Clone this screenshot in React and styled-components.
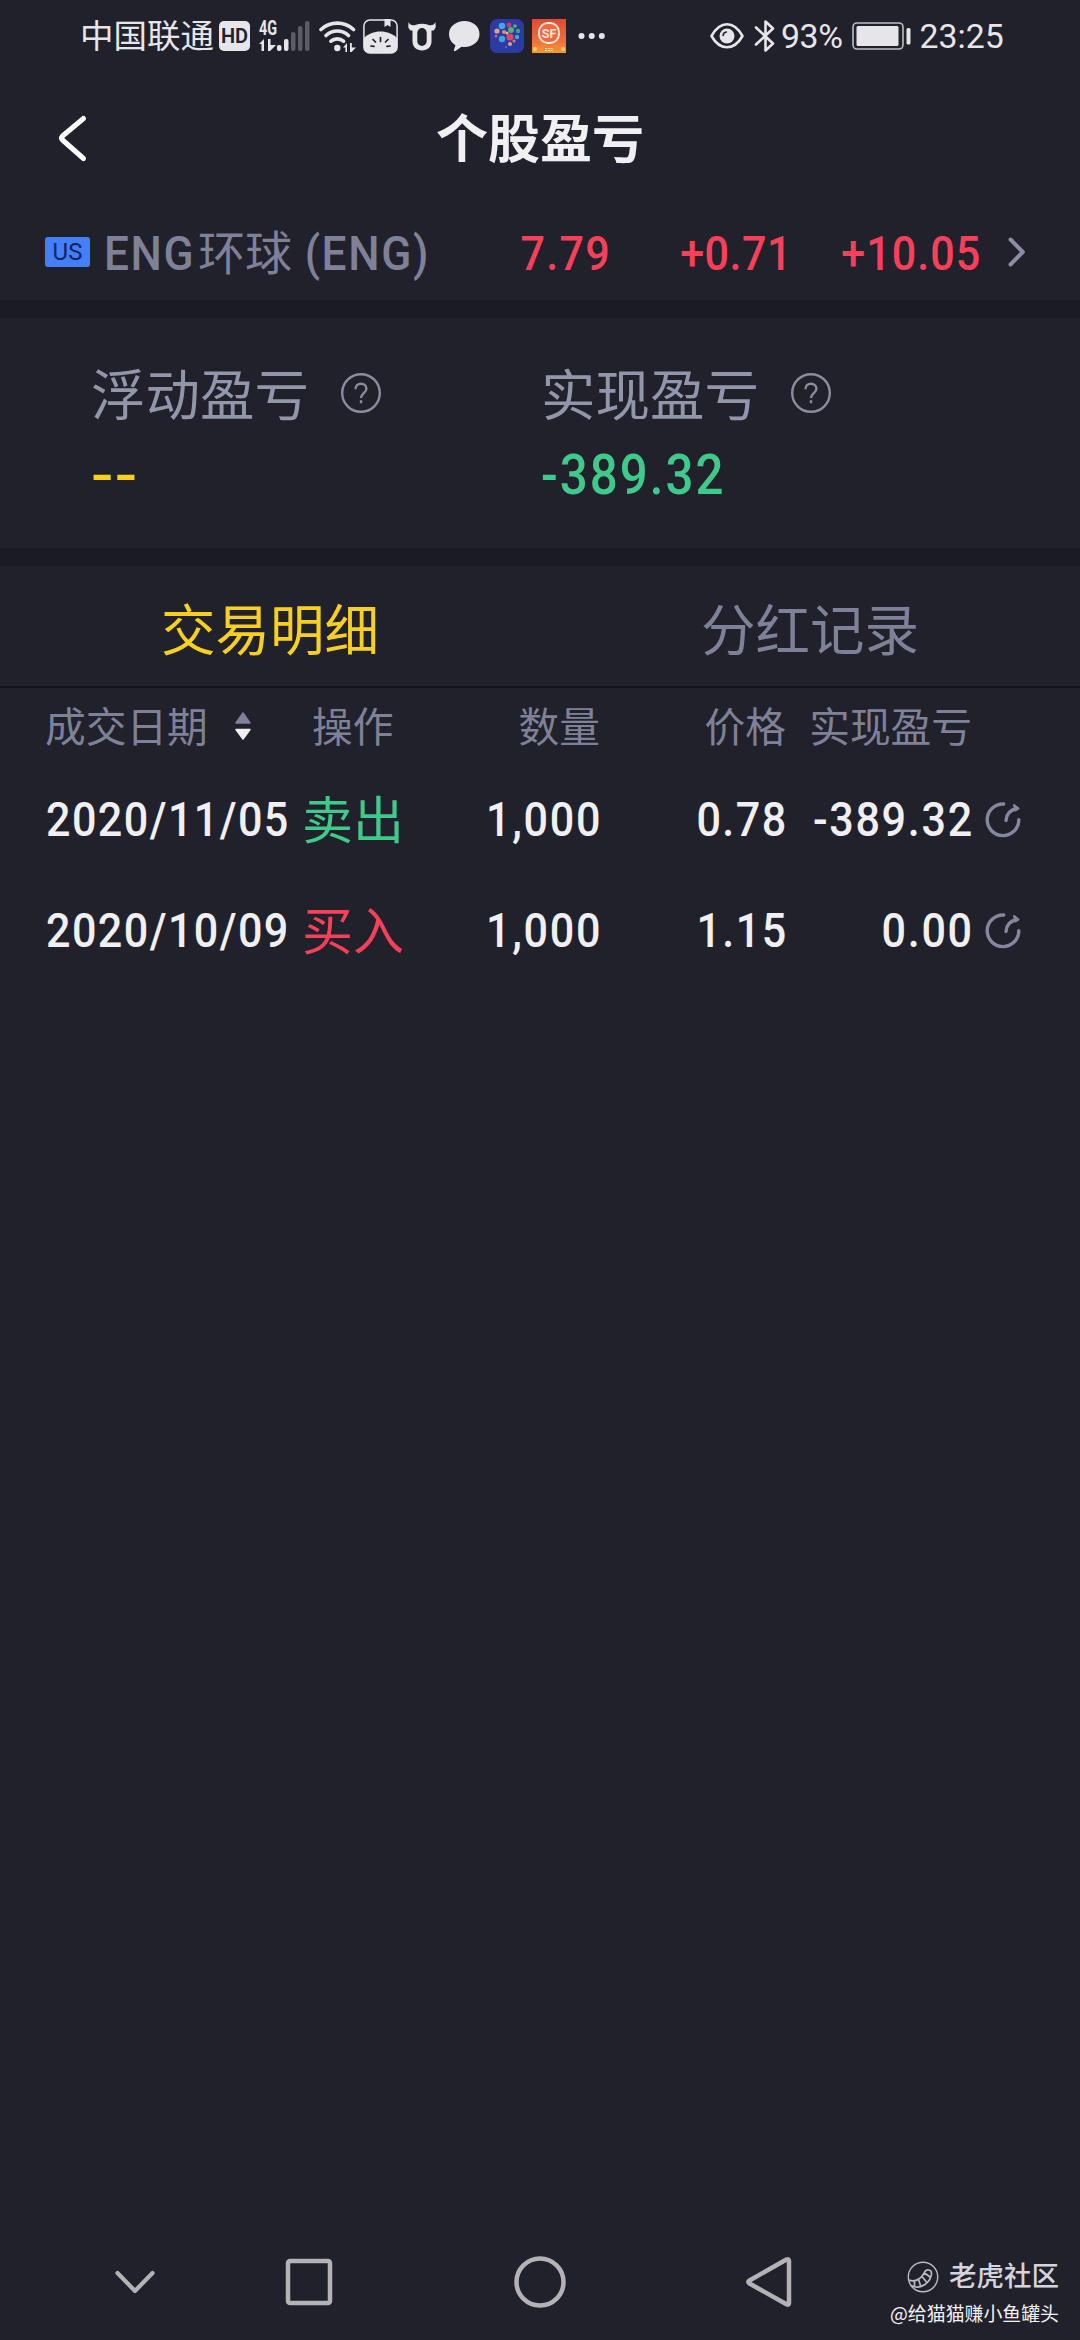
import React from 'react'
import styled, { createGlobalStyle } from 'styled-components'

const colors = {
    bg: '#21212b',
    gap: '#1b1b24',
    line: '#14141c',
    text: '#f0f0f2',
    muted: '#7f8199',
    label: '#9395ab',
    red: '#f8405a',
    green: '#3fc98a',
    yellow: '#f8d021',
    status: '#e6e6ea',
    nav: '#b3b3b7',
}

const GlobalStyle = createGlobalStyle`
    body {
        margin: 0;
        background: ${colors.bg};
        font-family: Roboto, 'Noto Sans CJK SC', sans-serif;
    }
`

const Screen = styled.div`
    position: relative;
    display: flex;
    flex-direction: column;
    width: 1080px;
    height: 2340px;
    overflow: hidden;
    background: ${colors.bg};
    color: ${colors.text};
    white-space: nowrap;
`

/* status bar */

const StatusBar = styled.div`
    display: flex;
    justify-content: space-between;
    height: 74px;
    padding: 0 77px 0 80px;
    box-sizing: border-box;
    color: ${colors.status};
    font-size: 33.5px;
    line-height: 76px;
`

const StatusGroup = styled.div`
    display: flex;
    align-items: center;
    height: 72px;
`

const StatusIcon = styled.svg`
    display: block;
    flex: none;
    margin-left: ${(props) => props.$gap || 0}px;
`

const StatusText = styled.span`
    width: ${(props) => props.$width}px;
    margin-left: ${(props) => props.$gap || 0}px;
    padding-top: 1px;
    font-size: ${(props) => props.$size || 33.5}px;
    letter-spacing: ${(props) => props.$spacing || 0}px;
`

const HdBadge = styled.span`
    width: 31px;
    height: 30px;
    margin-left: 5px;
    border-radius: 5px;
    background: ${colors.status};
    color: ${colors.bg};
    font-size: 20px;
    font-weight: 600;
    line-height: 31px;
    text-align: center;
`

const Network = styled.div`
    display: flex;
    flex-direction: column;
    width: 19px;
    height: 32px;
    margin-left: 9px;
`

const NetworkType = styled.span`
    height: 19px;
    font-size: 20px;
    font-weight: 700;
    line-height: 17px;
    transform: scaleX(0.72);
    transform-origin: left;
`

/* page header */

const Header = styled.header`
    display: grid;
    grid-template-columns: 140px 1fr 140px;
    align-items: center;
    height: 130px;
`

const BackIcon = styled.svg`
    display: block;
    margin-left: 56px;
`

const Title = styled.h1`
    margin: 0;
    padding-top: 4px;
    font-size: 52px;
    font-weight: 700;
    line-height: 76px;
    text-align: center;
`

/* narrow digits */

const Num = styled.span`
    display: block;
    font-size: ${(props) => props.$size || 49}px;
    font-weight: 500;
    letter-spacing: ${(props) => props.$spacing || 2}px;
    margin-right: -${(props) => props.$spacing || 2}px;
    transform: scaleX(${(props) => props.$scale || 0.88});
    transform-origin: ${(props) => props.$origin || 'right'};
`

const Quote = styled.section`
    display: grid;
    grid-template-columns: 45px 340px 180px 181px 189px 1fr;
    align-items: center;
    height: 96px;
    padding-left: 45px;
    color: ${colors.red};
    line-height: 80px;
`

const Market = styled.span`
    height: 30px;
    border-radius: 3px;
    background: #447ffb;
    color: #10245c;
    font-size: 24px;
    line-height: 31px;
    text-align: center;
`

const StockName = styled.span`
    display: flex;
    padding: 3px 0 0 14px;
    color: ${colors.muted};
    font-size: 47px;
`

const Latin = styled.span`
    width: ${(props) => props.$width}px;
    font-size: 48px;
    font-weight: 500;
    letter-spacing: 1.8px;
    transform: scaleX(0.92);
    transform-origin: left;
`

const QuoteCell = styled.span`
    display: flex;
    justify-content: flex-end;
    padding-top: 3px;
`

const Divider = styled.div`
    height: 18px;
    background: ${colors.gap};
`

/* summary */

const Summary = styled.section`
    display: grid;
    grid-template-columns: 450px 1fr;
    height: 230px;
    padding: 48px 0 0 91px;
    box-sizing: border-box;
`

const SummaryLabel = styled.div`
    display: flex;
    align-items: center;
    height: 60px;
    color: ${colors.label};
    font-size: 54.5px;
    line-height: 64px;
`

const HelpIcon = styled.svg`
    margin: -6px 0 0 31px;
`

const SummaryValue = styled.div`
    display: flex;
    height: 60px;
    margin-top: 19px;
    color: ${(props) => props.color};
    line-height: 61px;
`

/* tabs */

const Tabs = styled.nav`
    display: grid;
    grid-template-columns: 1fr 1fr;
    height: 122px;
    box-sizing: border-box;
    border-bottom: 2px solid ${colors.line};
`

const Tab = styled.div`
    padding-top: 5px;
    color: ${(props) => (props.$active ? colors.yellow : colors.muted)};
    font-size: 54.5px;
    line-height: 120px;
    text-align: center;
`

/* trades */

const Row = styled.div`
    display: grid;
    grid-template-columns: 256px 128px 171px 186px 186px 1fr;
    align-items: center;
    height: 111px;
    padding-left: 45px;
    line-height: 80px;
`

const HeadRow = styled(Row)`
    height: 76px;
    color: ${colors.muted};
    font-size: 40.7px;
    line-height: 80px;
`

const Cell = styled.span`
    display: flex;
    align-items: center;
    justify-content: ${(props) => (props.$right ? 'flex-end' : 'flex-start')};
    padding-left: ${(props) => props.$indent || 0}px;
`

const Action = styled.span`
    padding-top: 4px;
    color: ${(props) => (props.$sell ? colors.green : colors.red)};
    font-size: 51px;
`

const SortIcon = styled.svg`
    margin: -4px 0 0 26px;
`

const ShareIcon = styled.svg`
    display: block;
    margin-left: 13px;
`

/* system navigation */

const SystemNav = styled.footer`
    display: grid;
    grid-template-columns: 194px 154px 308px 150px;
    justify-content: start;
    align-items: center;
    justify-items: center;
    height: 116px;
    margin-top: auto;
    padding-left: 38px;
`

const Watermark = styled.div`
    position: absolute;
    right: 21px;
    bottom: 12px;
    display: flex;
    flex-direction: column;
    align-items: flex-end;
`

const Community = styled.div`
    display: flex;
    align-items: center;
    gap: 10px;
    height: 34px;
    color: #d3d4dd;
    font-size: 27.5px;
    font-weight: 500;
    line-height: 34px;
`

const Author = styled.div`
    height: 28px;
    margin-top: 6px;
    color: #f2f2f4;
    font-family: 'Noto Sans CJK SC', sans-serif;
    font-size: 18.9px;
    line-height: 25px;
`

const trades = [
    { date: '2020/11/05', sell: true, action: '卖出', qty: '1,000', price: '0.78', profit: '-389.32' },
    { date: '2020/10/09', sell: false, action: '买入', qty: '1,000', price: '1.15', profit: '0.00' },
]

const dots = [
    [12, 7, 3.3, '#3fa9e8'], [19, 6, 2.4, '#d9355a'], [25, 7, 1.8, '#58b96a'],
    [7, 12, 2.6, '#e2a08c'], [14, 13, 2, '#e78f4c'], [21, 11, 3, '#4fb37c'],
    [28, 12, 2.2, '#40a76b'], [6, 17, 1.5, '#d85a7c'], [12, 20, 3.2, '#39a6dc'],
    [20, 18, 3.5, '#dd4465'], [27, 18, 2.2, '#46a7d8'], [17, 14, 1.5, '#f0b49c'],
    [24, 22, 1.6, '#e4774f'], [20, 25, 2.1, '#dc9a90'], [16, 28, 1, '#4c78e0'],
]

const Help = () => (
    <HelpIcon width='42' height='42' viewBox='0 0 42 42' fill='none' stroke='#8b8c9c' strokeWidth='2.4'>
        <circle cx='21' cy='21' r='18.8' />
        <path d='M15.5 17.2c0-3.4 2.3-5.4 5.5-5.4s5.4 2 5.4 4.9c0 4.4-5.4 4.4-5.4 9.3' />
        <path d='M21 28.2v3' />
    </HelpIcon>
)

const Share = () => (
    <ShareIcon width='38' height='38' viewBox='0 0 38 38' fill='none' stroke='#85879f' strokeWidth='3.4' strokeLinecap='round' strokeLinejoin='round'>
        <path d='M18.7 3A15.800 15.800 0 1 0 33.800 18.800' />
        <path d='M21 19.500c.3-6.500 4-10.500 11-12' />
        <path d='M29 4 33.500 7.500 30.500 9.500z' fill='#85879f' strokeWidth='2' />
    </ShareIcon>
)

const Status = () => (
    <StatusBar>
        <StatusGroup>
            <StatusText $width={134}>中国联通</StatusText>
            <HdBadge>HD</HdBadge>
            <Network>
                <NetworkType>4G</NetworkType>
                <svg width='17' height='12' viewBox='0 0 17 12' fill={colors.status}>
                    <path d='M0 5 5 0v12H2.500V5zM9 0h2.500v6H17l-6 6H9z' />
                </svg>
            </Network>
            <StatusIcon width='34' height='32' viewBox='0 0 34 32' $gap={-1}>
                <rect x='0' y='25' width='4.500' height='6' rx='2' fill={colors.status} />
                <rect x='7' y='19' width='4.500' height='12' rx='2' fill={colors.status} />
                <rect x='14' y='12' width='4.500' height='19' rx='2' fill='#5c5c66' />
                <rect x='21' y='6' width='4.500' height='25' rx='2' fill='#5c5c66' />
                <rect x='28' y='1' width='4.500' height='30' rx='2' fill='#5c5c66' />
            </StatusIcon>
            <StatusIcon width='38' height='32' viewBox='0 0 38 32' fill='none' stroke={colors.status} strokeWidth='3.600' strokeLinecap='round' $gap={7.5}>
                <path d='M2 9.500a24 24 0 0 1 32.500 0M7 15.500a16.500 16.500 0 0 1 22.500 0M12 21.200a9.500 9.500 0 0 1 12.500 0' />
                <circle cx='18.300' cy='28' r='3.200' fill={colors.status} stroke='none' />
                <path d='M24 27.500 28 23v9h-1.600v-4.500zM31 23h1.800v4.500H37L32.500 32H31z' fill={colors.status} stroke='none' />
            </StatusIcon>
            <StatusIcon width='35' height='35' viewBox='0 0 35 35' $gap={6}>
                <rect x='.9' y='.9' width='33.200' height='33.200' rx='6' fill='none' stroke={colors.status} strokeWidth='1.500' />
                <path d='M21.500 0h6v8l-3-2-3 2z' fill={colors.status} />
                <path d='M1 19c4-4 10-6.500 16.500-6.500S30 15 34 19v9a6 6 0 0 1-6 6H7a6 6 0 0 1-6-6z' fill={colors.status} />
                <path d='M8 27l3 .4M10 20.500l2.500 2.500M17.500 18.500v4M25 20.500 22.500 23M27 27l-3 .4' stroke={colors.bg} strokeWidth='1.700' strokeLinecap='round' />
            </StatusIcon>
            <StatusIcon width='30' height='32' viewBox='0 0 30 32' $gap={9.5}>
                <path d='M1.500 2c1.500 3 4 4.200 7.500 2.700 4-1.400 8-1.400 12 0C24.500 6.200 27 5 28.500 2l.2 5.500-2 3h-2.200V21c0 6-4 9.500-9.500 9.500S5.500 27 5.500 21V10.500H3.300l-2-3z' fill={colors.status} />
                <rect x='10.300' y='8' width='9.400' height='18' rx='4.700' fill={colors.bg} />
            </StatusIcon>
            <StatusIcon width='32' height='32' viewBox='0 0 32 32' fill={colors.status} $gap={11}>
                <path d='M16.500 1C25 1 31.500 6.500 31.500 14S25 27 16.500 27c-1 0-2-.1-3-.3L7.500 31c-1 .5-2-.2-1.500-1.300l1.500-4.500C3.500 22.700 1 19 1 14 1 6.500 8 1 16.500 1z' />
            </StatusIcon>
            <StatusIcon width='34' height='34' viewBox='0 0 34 34' $gap={9.5}>
                <rect width='34' height='34' rx='7' fill='#2d3aa3' />
                {dots.map(([x, y, r, fill]) => (
                    <circle key={`${x}-${y}`} cx={x} cy={y} r={r} fill={fill} />
                ))}
            </StatusIcon>
            <StatusIcon width='34' height='34' viewBox='0 0 34 34' $gap={8}>
                <defs>
                    <linearGradient id='sf' x1='0' y1='0' x2='0' y2='1'>
                        <stop offset='0' stopColor='#e04a35' />
                        <stop offset='.6' stopColor='#f26a3c' />
                        <stop offset='1' stopColor='#f29a32' />
                    </linearGradient>
                </defs>
                <rect width='34' height='34' fill='url(#sf)' />
                <rect x='7' y='4' width='20' height='20' rx='9' fill='#ee6a45' stroke='#fbe6d4' strokeWidth='2' />
                <text x='17' y='18.800' textAnchor='middle' fontFamily='Roboto' fontSize='12.500' fontWeight='700' fill='#fbe6d4'>SF</text>
                <path d='M13 29.500h8M13 31.500h8' stroke='#fbe6d4' strokeWidth='1.200' strokeDasharray='2 .8' />
                <circle cx='3' cy='30' r='2' fill='#ffd36a' />
                <circle cx='31' cy='30' r='2' fill='#ffd36a' />
            </StatusIcon>
            <StatusIcon width='28' height='8' viewBox='0 0 28 8' fill={colors.status} $gap={12.5}>
                <circle cx='3.500' cy='4' r='3' />
                <circle cx='13.700' cy='4' r='3' />
                <circle cx='23.800' cy='4' r='3' />
            </StatusIcon>
        </StatusGroup>
        <StatusGroup>
            <StatusIcon width='34' height='28' viewBox='0 0 34 28' fill='none' stroke={colors.status} strokeWidth='2.600'>
                <path d='M1.500 14C6 6 11 2.300 17 2.300S28 6 32.500 14C28 22 23 25.200 17 25.200S6 22 1.500 14z' strokeLinejoin='round' />
                <circle cx='17' cy='14' r='7.500' fill={colors.status} stroke='none' />
                <path d='M13.200 13.500c0-2 1.300-3.300 3.200-3.500' stroke={colors.bg} strokeWidth='1.600' strokeLinecap='round' />
            </StatusIcon>
            <StatusIcon width='22' height='34' viewBox='0 0 22 34' fill='none' stroke={colors.status} strokeWidth='2.600' strokeLinejoin='round' strokeLinecap='round' $gap={10}>
                <path d='M2 8.500 19 24.500 11.500 31.500V2.500L19 9.500 2 25.500' />
            </StatusIcon>
            <StatusText $width={68} $gap={5} $size={33.8} $spacing={-0.4}>93%</StatusText>
            <StatusIcon width='60' height='28' viewBox='0 0 60 28' $gap={2.5}>
                <rect x='1' y='1' width='50' height='26' rx='4' fill='none' stroke='#bcbcc3' strokeWidth='1.600' />
                <rect x='4.500' y='4' width='42' height='20' rx='1.500' fill={colors.status} />
                <rect x='54.500' y='6' width='4' height='16.500' rx='1.500' fill={colors.status} />
            </StatusIcon>
            <StatusText $width={83.5} $gap={8} $size={33.8}>23:25</StatusText>
        </StatusGroup>
    </StatusBar>
)

const App = () => {
    return (
        <Screen>
            <GlobalStyle />
            <Status />
            <Header>
                <BackIcon width='34' height='50' viewBox='0 0 34 50' fill='none' stroke='#fff' strokeWidth='5' strokeLinecap='round' strokeLinejoin='round'>
                    <path d='M27.500 4.500 6.500 22Q4.500 24 6.500 26L27.500 44.500' />
                </BackIcon>
                <Title>个股盈亏</Title>
            </Header>

            <Quote>
                <Market>US</Market>
                <StockName>
                    <Latin $width={94}>ENG</Latin>
                    环球
                    <Latin $width={130}>&nbsp;(ENG)</Latin>
                </StockName>
                <QuoteCell><Num $spacing={1.5}>7.79</Num></QuoteCell>
                <QuoteCell><Num $spacing={0.5}>+0.71</Num></QuoteCell>
                <QuoteCell><Num $spacing={1.2}>+10.05</Num></QuoteCell>
                <svg width='60' height='36' viewBox='0 0 60 36' fill='none' stroke='#8b8da5' strokeWidth='4' strokeLinecap='round' strokeLinejoin='round'>
                    <path d='M30.500 5.500 42.800 18 30.500 30.500' />
                </svg>
            </Quote>
            <Divider />

            <Summary>
                <div>
                    <SummaryLabel>浮动盈亏<Help /></SummaryLabel>
                    <SummaryValue color={colors.yellow}>
                        <Num $size={56} $scale={1.18} $spacing={1} $origin='left'>--</Num>
                    </SummaryValue>
                </div>
                <div>
                    <SummaryLabel>实现盈亏<Help /></SummaryLabel>
                    <SummaryValue color={colors.green}>
                        <Num $size={56} $spacing={2.3} $origin='left'>-389.32</Num>
                    </SummaryValue>
                </div>
            </Summary>
            <Divider />

            <Tabs>
                <Tab $active>交易明细</Tab>
                <Tab>分红记录</Tab>
            </Tabs>

            <HeadRow>
                <Cell>
                    成交日期
                    <SortIcon width='18' height='30' viewBox='0 0 18 30' strokeLinejoin='round' strokeWidth='1.500'>
                        <path d='M9 2 16 12H2z' fill='#7f819d' stroke='#7f819d' />
                        <path d='M9 28 16 18.500H2z' fill={colors.text} stroke={colors.text} />
                    </SortIcon>
                </Cell>
                <Cell $indent={11}>操作</Cell>
                <Cell $right>数量</Cell>
                <Cell $right>价格</Cell>
                <Cell $right>实现盈亏</Cell>
            </HeadRow>
            {trades.map((trade) => (
                <Row key={trade.date}>
                    <Cell $indent={1}><Num $spacing={1.6} $origin='left'>{trade.date}</Num></Cell>
                    <Cell $indent={1}><Action $sell={trade.sell}>{trade.action}</Action></Cell>
                    <Cell $right><Num>{trade.qty}</Num></Cell>
                    <Cell $right><Num $spacing={1.6}>{trade.price}</Num></Cell>
                    <Cell $right><Num $spacing={1.9}>{trade.profit}</Num></Cell>
                    <Share />
                </Row>
            ))}

            <SystemNav>
                <svg width='44' height='28' viewBox='0 0 44 28' fill='none' stroke={colors.nav} strokeWidth='4.200' strokeLinecap='round' strokeLinejoin='round'>
                    <path d='M4.500 5 22 23 39.500 5' />
                </svg>
                <svg width='48' height='48' viewBox='0 0 48 48' fill='none' stroke={colors.nav} strokeWidth='4.500'>
                    <rect x='3' y='3' width='42' height='42' rx='2' />
                </svg>
                <svg width='52' height='52' viewBox='0 0 52 52' fill='none' stroke={colors.nav} strokeWidth='4.500'>
                    <circle cx='26' cy='26' r='23.500' />
                </svg>
                <svg width='52' height='52' viewBox='0 0 52 52' fill='none' stroke={colors.nav} strokeWidth='4.500' strokeLinejoin='round'>
                    <path d='M43.500 3.500 Q46 2.500 46 5V47Q46 49.500 43.500 48.300L6.500 27.500Q4 26 6.500 24.500z' />
                </svg>
            </SystemNav>

            <Watermark>
                <Community>
                    <svg width='32' height='32' viewBox='0 0 32 32' fill='none' stroke='#b9bac4' strokeWidth='1.400'>
                        <circle cx='16' cy='16' r='14.700' />
                        <path d='M2 19c3 1.500 7 .8 10.500-1.500 3-2 4-4.500 5.500-7s6.500-2 6.500 1.500c0 4-2.500 8.500-6.500 11.500-4 2.800-9 3.500-14 1M7.500 20v5.500M11.500 18.500l2 6M15 15.500l4.500 5.500M17.500 12l5.500 4' strokeWidth='1.700' />
                    </svg>
                    老虎社区
                </Community>
                <Author>@给猫猫赚小鱼罐头</Author>
            </Watermark>
        </Screen>
    )
}

export default App
